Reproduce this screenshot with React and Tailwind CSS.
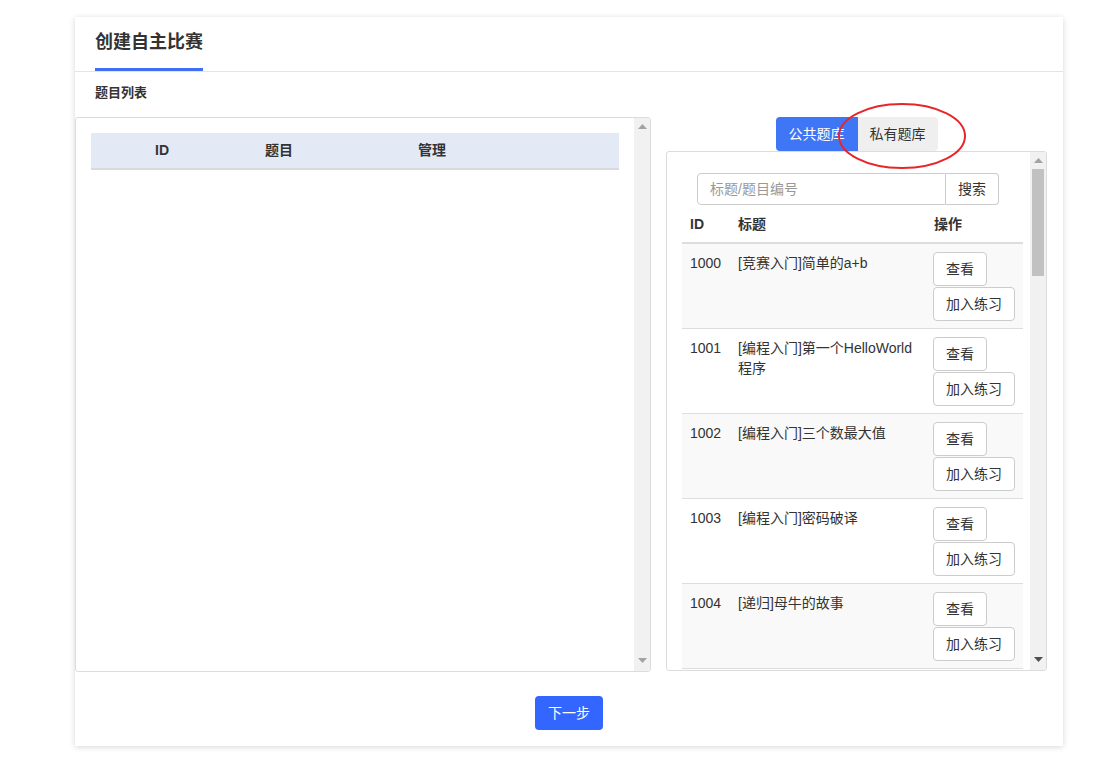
import React from "react";

const font = { fontFamily: '"Liberation Sans", "Noto Sans CJK SC", sans-serif' };

const rows = [
  { id: "1000", title: ["[竞赛入门]简单的a+b"] },
  { id: "1001", title: ["[编程入门]第一个HelloWorld", "程序"] },
  { id: "1002", title: ["[编程入门]三个数最大值"] },
  { id: "1003", title: ["[编程入门]密码破译"] },
  { id: "1004", title: ["[递归]母牛的故事"] },
];

function UpArrow({ color }) {
  return (
    <svg width="9" height="5" viewBox="0 0 9 5">
      <path d="M0 5 L4.5 0 L9 5 Z" fill={color} />
    </svg>
  );
}
function DownArrow({ color }) {
  return (
    <svg width="9" height="5" viewBox="0 0 9 5">
      <path d="M0 0 L4.5 5 L9 0 Z" fill={color} />
    </svg>
  );
}

export default function App() {
  return (
    <div className="min-h-[766px] w-[1102px] bg-white pt-[17px] text-[#333]" style={font}>
      <div className="ml-[75px] flex h-[729px] w-[988px] flex-col bg-white shadow-[0_1px_6px_rgba(0,0,0,0.16)]">
        {/* header */}
        <div className="border-b border-[#e4e4e4] pl-[20px]">
          <div className="inline-block border-b-[3px] border-[#3f6ff3] pt-[13px] pb-[14px] text-[18px] font-bold leading-[24px] text-[#333]">
            创建自主比赛
          </div>
        </div>
        <div className="pl-[20px] pt-[11px] text-[13px] font-bold leading-[20px]">题目列表</div>

        <div className="mt-[14px] flex items-start">
          {/* left panel */}
          <div className="flex h-[555px] w-[576px] rounded-[3px] border border-[#dcdcdc]">
            <div className="flex-1 pl-[15px] pr-[15px] pt-[15px]">
              <div className="grid h-[37px] grid-cols-[142px_92px_214px_1fr] items-center border-b-2 border-[#dadada] bg-[#e3eaf6] text-[14px] font-bold">
                <div className="text-center">ID</div>
                <div className="text-center">题目</div>
                <div className="text-center">管理</div>
                <div />
              </div>
            </div>
            <div className="flex w-[16px] flex-col items-center justify-between bg-[#f1f1f1] pt-[6px] pb-[8px]">
              <UpArrow color="#a3a3a3" />
              <DownArrow color="#a3a3a3" />
            </div>
          </div>

          {/* right column */}
          <div className="ml-[15px] flex w-[381px] flex-col">
            <div className="relative flex justify-center">
              <div className="flex h-[34px] text-[14px]">
                <div className="flex items-center rounded-l-[4px] bg-[#3f76f6] px-[13px] text-white">公共题库</div>
                <div className="flex items-center rounded-r-[4px] bg-[#efefef] px-[12px] text-[#333]">私有题库</div>
              </div>
              <svg className="pointer-events-none absolute left-[170px] top-[-16px]" width="132" height="72" viewBox="0 0 132 72">
                <ellipse cx="66" cy="35" rx="63" ry="32" fill="none" stroke="#e8262a" strokeWidth="2" />
              </svg>
            </div>
            <div className="flex h-[520px] overflow-hidden rounded-[3px] border border-[#dcdcdc]">
              <div className="flex-1 pl-[15px] pr-[7px] pt-[21px]">
                <div className="ml-[15px] flex h-[32px] w-[302px]">
                  <div className="flex flex-1 items-center rounded-l-[4px] border border-[#cccccc] px-[12px] text-[14px] text-[#999]">
                    标题/题目编号
                  </div>
                  <div className="flex w-[53px] items-center justify-center rounded-r-[4px] border border-l-0 border-[#cccccc] text-[14px]">
                    搜索
                  </div>
                </div>
                <div className="grid grid-cols-[48px_196px_1fr] border-b-2 border-[#dddddd] text-[14px] font-bold leading-[20px]">
                  <div className="px-[8px] pt-[9px] pb-[8px]">ID</div>
                  <div className="px-[8px] pt-[9px] pb-[8px]">标题</div>
                  <div className="px-[8px] pt-[9px] pb-[8px]">操作</div>
                </div>
                {rows.map((r, i) => (
                  <div
                    key={r.id}
                    className={`grid h-[85px] grid-cols-[48px_196px_1fr] border-b border-[#dddddd] text-[14px] leading-[20px] ${i % 2 === 0 ? "bg-[#f9f9f9]" : "bg-white"}`}
                  >
                    <div className="px-[8px] pt-[9px]">{r.id}</div>
                    <div className="px-[8px] pt-[9px]">
                      {r.title.map((t, j) => (
                        <div key={j}>{t}</div>
                      ))}
                    </div>
                    <div className="flex flex-col items-start gap-[1px] pl-[7px] pt-[8px]">
                      <div className="flex h-[34px] items-center rounded-[4px] border border-[#cccccc] bg-white px-[12px]">查看</div>
                      <div className="flex h-[34px] items-center rounded-[4px] border border-[#cccccc] bg-white px-[12px]">加入练习</div>
                    </div>
                  </div>
                ))}
              </div>
              <div className="flex w-[16px] flex-col items-center bg-[#f1f1f1] pt-[6px] pb-[8px]">
                <UpArrow color="#a3a3a3" />
                <div className="mt-[6px] h-[107px] w-[12px] bg-[#c1c1c1]" />
                <div className="flex-1" />
                <DownArrow color="#505050" />
              </div>
            </div>
          </div>
        </div>

        <div className="mt-[24px] flex justify-center">
          <div className="flex h-[34px] w-[68px] items-center justify-center rounded-[4px] bg-[#3366fe] text-[14px] text-white">
            下一步
          </div>
        </div>
      </div>
    </div>
  );
}
